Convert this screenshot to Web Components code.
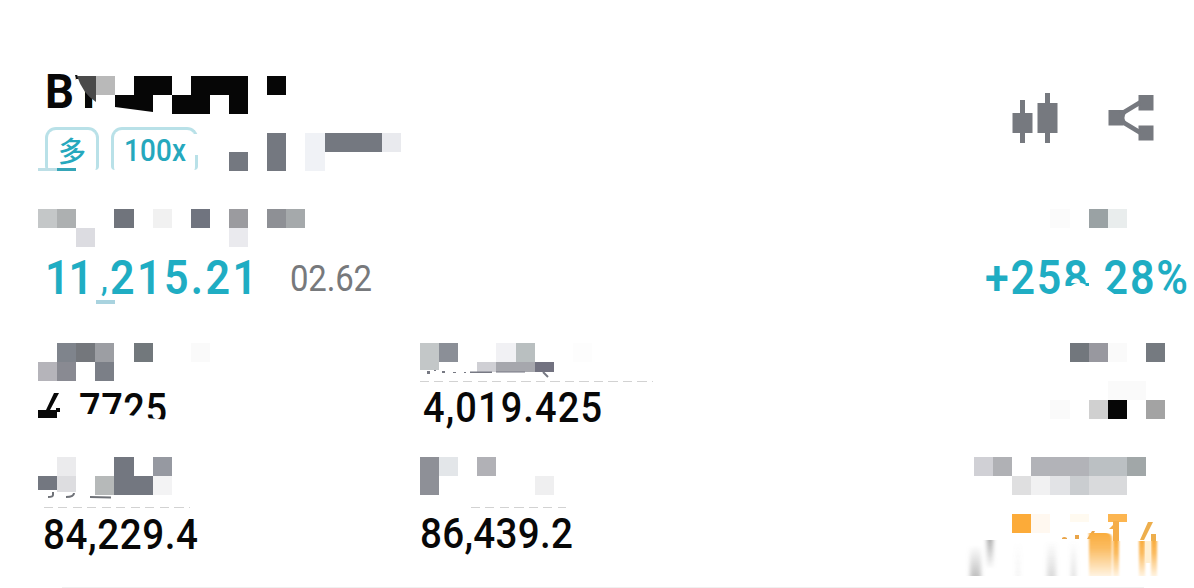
<!DOCTYPE html>
<html lang="zh">
<head>
<meta charset="utf-8">
<title>Position</title>
<style>
  body {
    margin: 0;
    background: #fff;
    font-family: Roboto, "Noto Sans CJK SC", sans-serif;
  }
</style>
</head>
<body>
<position-card></position-card>

<script>
const CELL = 19.1;

// one line of text, fitted to a width; the box is as high as the capitals
class FitText extends HTMLElement {
  constructor() {
    super();
    this.attachShadow({ mode: 'open' });
  }

  connectedCallback() {
    const width = Number(this.getAttribute('width'));
    const cap = Number(this.getAttribute('cap'));
    const weight = this.getAttribute('weight') || 500;
    const squeeze = Number(this.getAttribute('squeeze') || 0.9);
    this.shadowRoot.innerHTML = `
      <style>
        :host { display: block; width: ${width}px; height: ${cap}px; }
        svg { display: block; overflow: visible; }
        text {
          font-size: ${(cap / 0.711).toFixed(2)}px;
          font-weight: ${weight};
          fill: currentColor;
          white-space: pre;
        }
      </style>
      <svg width="${width}" height="${cap}">
        <text x="0" y="${cap}" transform="scale(${squeeze} 1)" textLength="${width / squeeze}">${this.getAttribute('value')}</text>
      </svg>
    `;
  }
}
customElements.define('fit-text', FitText);

// cells: "col row cols rows colour; ..." counted in mosaic cells
class PixelMosaic extends HTMLElement {
  constructor() {
    super();
    this.attachShadow({ mode: 'open' });
  }

  connectedCallback() {
    const cols = Number(this.getAttribute('cols'));
    const rows = Number(this.getAttribute('rows') || 2);
    const rects = this.getAttribute('cells').split(';').map((cell) => {
      const [c, r, w, h, color] = cell.trim().split(/\s+/);
      const x = Math.round(c * CELL);
      const y = Math.round(r * CELL);
      const x2 = Math.round((+c + +w) * CELL);
      const y2 = Math.round((+r + +h) * CELL);
      return `<rect x="${x}" y="${y}" width="${x2 - x}" height="${y2 - y}" fill="#${color}"/>`;
    }).join('');
    this.shadowRoot.innerHTML = `
      <style>
        :host {
          display: block;
          position: relative;
          width: ${cols * CELL}px;
          height: ${Math.round(rows * CELL)}px;
        }
        svg { display: block; overflow: visible; }
        ::slotted(svg) { position: absolute; left: 0; top: 0; overflow: visible; }
      </style>
      <svg width="100%" height="100%" shape-rendering="crispEdges">${rects}</svg>
      <slot></slot>
    `;
  }
}
customElements.define('pixel-mosaic', PixelMosaic);

class TagBadge extends HTMLElement {
  constructor() {
    super();
    this.attachShadow({ mode: 'open' });
    this.shadowRoot.innerHTML = `
      <style>
        :host {
          display: flex;
          justify-content: center;
          box-sizing: border-box;
          height: 43px;
          padding-top: 9px;
          border: 3px solid #b9e1e8;
          border-bottom: 0;
          border-radius: 11px 11px 4px 4px;
          color: #25a8bd;
        }
      </style>
      <slot></slot>
    `;
  }
}
customElements.define('tag-badge', TagBadge);

class CardActions extends HTMLElement {
  constructor() {
    super();
    this.attachShadow({ mode: 'open' });
    this.shadowRoot.innerHTML = `
      <style>
        :host { display: flex; gap: 50px; align-items: flex-start; color: #76797f; }
        svg { display: block; fill: currentColor; }
      </style>
      <svg width="46" height="50" viewBox="0 0 46 50">
        <path d="M8 7h5v13h7.500v20h-7.500v10h-5v-10h-7.500v-20h7.500zM33 0h5v10h7.500v30h-7.500v10h-5v-10h-7.500v-30h7.500z"/>
      </svg>
      <svg width="46" height="50" viewBox="0 0 46 50">
        <path d="M.5 17h15v15.500h-15zM30.500 2h15v15.500h-15zM30.500 32.500h15v15h-15z"/>
        <path d="M13 21l19-11.500M13 28l19 11.500" fill="none" stroke="currentColor" stroke-width="4.500"/>
        <path d="M14 19l4 1q-3 4.500 0 9l-4 1z"/>
      </svg>
    `;
  }
}
customElements.define('card-actions', CardActions);

class DashedRule extends HTMLElement {
  constructor() {
    super();
    this.attachShadow({ mode: 'open' });
    this.shadowRoot.innerHTML = `
      <style>
        :host {
          display: block;
          height: 1px;
          background: repeating-linear-gradient(90deg, #d2d2d2 0 9px, transparent 9px 14.500px);
        }
      </style>
    `;
  }
}
customElements.define('dashed-rule', DashedRule);

class PositionCard extends HTMLElement {
  constructor() {
    super();
    this.attachShadow({ mode: 'open' });
    this.shadowRoot.innerHTML = `
      <style>
        :host { display: block; width: 1194px; height: 588px; overflow: hidden; color: #080808; }
        section { display: grid; grid-template-columns: 382px 554px 220px; padding-left: 38px; box-sizing: border-box; }
        header { display: flex; justify-content: space-between; box-sizing: border-box; height: 209px; padding: 74px 40px 0 38px; }
        card-actions { padding-top: 19px; }
        .title { position: relative; padding-left: 7px; height: 53px; }
        .over { position: absolute; left: 0; top: 2px; }
        .line { display: flex; align-items: flex-start; position: relative; }
        .badges { padding-left: 7px; gap: 12px; width: 363px; }
        .badges svg { position: absolute; left: 0; top: 0; overflow: visible; }
        .badges .over { left: 191px; top: 6px; }
        .long { width: 54px; padding-top: 5px; font: 500 28px/30px "Noto Sans CJK SC", sans-serif; }
        .lev { width: 87px; }
        .pnl { height: 134px; }
        .pnl .line { padding-top: 13px; }
        .teal { color: #1fadc3; }
        .sub { color: #77797c; padding: 5px 0 0 33px; }
        .c { height: 114px; }
        .d { height: 130px; }
        .veil { position: absolute; left: 0; top: 0; overflow: visible; }
        hr { margin: 0 50px 0 62px; border: 0; height: 1px; background: #f0f0f0; }
      </style>

      <header>
        <div>
          <div class="title">
            <fit-text value="BT" width="58" cap="34" weight="700" squeeze=".95"></fit-text>
            <pixel-mosaic class="over" cols="13" cells="5 0 2 1 060606; 8 0 3 1 060606; 12 0 1 1 060606; 7 1 2 1 060606; 10 1 1 1 060606">
              <svg width="250" height="40">
                <path d="M37-3h41v19h-24v-2h-8l-9-12z" fill="#fff"/>
                <path d="M37-1h2l3 4h-4z" fill="#111"/>
                <path d="M47 15h7v17h-7z" fill="#080808"/>
                <path d="M39 0h19v26q-13-8-19-26z" fill="#4a4a4a"/>
                <path d="M58 0h19v19h-19z" fill="#b9b9b9"/>
                <path d="M77 19h38v17l-38-5z" fill="#060606"/>
              </svg>
            </pixel-mosaic>
          </div>
          <div class="line badges">
            <tag-badge class="long">多</tag-badge>
            <tag-badge class="lev"><fit-text value="100x" width="62" cap="22"></fit-text></tag-badge>
            <svg width="170" height="50">
              <path d="M154 7h8v21h-8z" fill="#fff"/>
              <path d="M0 41h19v3h-19z" fill="#bddfe6"/>
              <path d="M19 41h19v3h-19z" fill="#35a5b7"/>
            </svg>
            <pixel-mosaic class="over" cols="10" cells="0 1 1 1 747880; 2 0 1 2 747880; 4 0 1 2 f0f2f6; 5 0 3 1 747880; 8 0 1 1 e9eaee"></pixel-mosaic>
          </div>
        </div>
        <card-actions></card-actions>
      </header>

      <section class="pnl">
        <div>
          <pixel-mosaic cols="15" cells="0 0 1 1 c4c7c8; 1 0 1 1 adb0b1; 4 0 1 1 70747c; 6 0 1 1 f1f1f1; 8 0 1 1 70747f; 10 0 1 1 9b9b9f; 12 0 1 1 8e9095; 13 0 1 1 a5a9ab; 2 1 1 1 dcdce1; 10 1 1 1 eaeaee"></pixel-mosaic>
          <div class="line">
            <fit-text class="teal" style="padding-left:7px" value="11" width="48" cap="34" weight="600"></fit-text>
            <fit-text class="teal" style="padding:7px 0 0 8px" value="," width="9" cap="24" weight="500"></fit-text>
            <fit-text class="teal" value="215.21" width="147" cap="34" weight="600"></fit-text>
            <fit-text class="sub" value="02.62" width="82" cap="26" weight="400"></fit-text>
            <svg class="veil" width="100" height="60"><path d="M58 53h19v4h-19z" fill="#a9d3df"/></svg>
          </div>
        </div>
        <div></div>
        <div>
          <pixel-mosaic cols="9" cells="4 0 1 1 fbfbfb; 6 0 1 1 9aa2a4; 7 0 1 1 e9eded"></pixel-mosaic>
          <div class="line" style="padding-left:11px">
            <fit-text class="teal" value="+258.28%" width="203" cap="34" weight="600"></fit-text>
            <svg class="veil" width="220" height="60">
              <path d="M89 39h40l14 10h-54zM116 27h12v18h-12z" fill="#fff"/>
              <path d="M92 36h23v3h-23z" fill="#1fadc3"/>
              <path d="M97 39q7-6 15-1l-2 2z" fill="#fff"/>
            </svg>
          </div>
        </div>
      </section>

      <section class="c">
        <div>
          <pixel-mosaic cols="9" cells="1 0 1 1 7f848c; 2 0 1 1 74777c; 3 0 1 1 9c9ea3; 5 0 1 1 72787c; 8 0 1 1 fafafa; 0 1 1 1 b5b4ba; 1 1 1 1 898a92; 3 1 1 1 7b7f87"></pixel-mosaic>
          <div class="line" style="padding-top:12px">
            <fit-text style="padding-left:2px;margin-right:17px" value="4" width="22" cap="29"></fit-text>
            <fit-text value="7725" width="88" cap="30"></fit-text>
            <svg class="veil" width="140" height="60">
              <path d="M-1 10h26v36h-26zM42 33h43l24 4l22 2v7h-89z" fill="#fff"/>
              <path d="M0 29h8l8-17h5l-9 17h6v-2h4v4h-3v6h-19z" fill="#080808"/>
            </svg>
          </div>
        </div>
        <div>
          <pixel-mosaic cols="10" cells="0 0 1 1 c3c7c8; 1 0 1 1 8b8f97; 4 0 1 1 f1f1f4; 5 0 1 1 b9bfc0; 8 0 1 1 fdfdfd; 0 1 1 .42 c3c7c8; 3 1 1 .5 cfcfd4; 4 1 2 .5 a6a7ad; 6 1 1 .5 727280">
            <svg width="200" height="40">
              <path d="M7 28h3v3h-3zM22 28h3v2h-3zM14 27h2v1h-2zM33 29h3v1h-3zM44 29h2v1h-2zM50 28.500h22v1.500h-22zM76 28.500h29v1h-29z" fill="#777983"/>
              <path d="M123 29l5 5" stroke="#777983" stroke-width="2"/>
            </svg>
          </pixel-mosaic>
          <dashed-rule style="width:233px"></dashed-rule>
          <fit-text style="padding:10px 0 0 3px" value="4,019.425" width="179" cap="30"></fit-text>
        </div>
        <pixel-mosaic cols="10" rows="4" cells="5 0 1 1 72777d; 6 0 1 1 98989f; 7 0 1 1 fafafa; 9 0 1 1 757a80; 7 2 2 1 fafafa; 4 3 1 1 fafafa; 6 3 1 1 d0d0d0; 7 3 1 1 060606; 9 3 1 1 a3a3a3"></pixel-mosaic>
      </section>

      <section class="d">
        <div>
          <pixel-mosaic cols="8" cells="1 0 1 1 ebebed; 4 0 1 1 737780; 6 0 1 1 9699a1; 0 1 1 .75 737780; 1 1 1 .85 dddde0; 3 1 1 1 b6b9b9; 4 1 2 1 737780; 6 1 1 1 f3f3f4">
            <svg width="180" height="50">
              <path d="M15 35v3q0 2-5 2M36 36q0 4-8 4M52 40q10 0 21 .5" fill="none" stroke="#6f7278" stroke-width="2"/>
            </svg>
          </pixel-mosaic>
          <dashed-rule style="width:146px;margin:12px 0 0 6px"></dashed-rule>
          <fit-text style="padding:10px 0 0 5px" value="84,229.4" width="155" cap="30.500"></fit-text>
        </div>
        <div>
          <pixel-mosaic cols="8" cells="0 0 1 2 8e9097; 1 0 1 1 e3e6e9; 3 0 1 1 b1b1b6; 6 1 1 1 efeff0"></pixel-mosaic>
          <dashed-rule style="width:95px;margin:12px 0 0 51px"></dashed-rule>
          <fit-text style="padding:9px 0 0 0" value="86,439.2" width="153" cap="30.500"></fit-text>
        </div>
        <pixel-mosaic cols="10" rows="4" cells="0 0 1 1 d0d0d5; 1 0 1 1 b0b1b5; 3 0 3 1 b2b3b8; 6 0 2 1 bbc0c3; 8 0 1 1 a1a7a8; 2 1 1 1 dfdfe0; 3 1 1 1 f1f1f2; 4 1 1 1 e2e3e6; 5 1 1 1 cacdd0; 6 1 2 1 d9dadc; 2 3 1 1 fcab39; 3 3 1 1 fff8f0; 5 3 1 .4 fffaf0; 7 3 1 .38 fcb550">
          <svg width="220" height="130">
            <defs>
              <linearGradient id="up" x2="0" y2="1"><stop offset="0" stop-color="#999" stop-opacity="0"/><stop offset="1" stop-color="#999"/></linearGradient>
              <linearGradient id="down" x2="0" y2="1"><stop offset="0" stop-color="#aaa"/><stop offset="1" stop-color="#aaa" stop-opacity="0"/></linearGradient>
              <linearGradient id="gold" x2="0" y2="1"><stop offset="0" stop-color="#f9ad3e"/><stop offset=".35" stop-color="#fbbc62"/><stop offset="1" stop-color="#fff3e0"/></linearGradient>
              <filter id="soft" x="-1" width="3" y="0" height="1"><feGaussianBlur stdDeviation="2 0"/></filter>
              <filter id="edge" x="-1" width="3" y="0" height="1"><feGaussianBlur stdDeviation=".8 0"/></filter>
            </defs>
            <path d="M88 81q2-2 5 0v1h-5zM101 78h4v4h-4zM113 82l5-8h3l-4 8z" fill="#e9a54a"/>
            <g filter="url(#soft)">
              <path d="M-4 88h11v31h-11z" fill="url(#up)" opacity=".6"/>
              <path d="M13 83h6v29h-6z" fill="url(#down)"/>
              <path d="M42 84h4v35h-4z" fill="url(#up)" opacity=".12"/>
              <path d="M73 84h9v35h-9z" fill="url(#up)" opacity=".35"/>
              <path d="M97 84h5v35h-5z" fill="url(#up)" opacity=".28"/>
            </g>
            <path d="M115 76h17q6 0 6 6v37h-23z" fill="url(#gold)" filter="url(#edge)"/>
            <path d="M139 64h6v20h-6z" fill="#f5ad48"/>
            <path d="M139 84h6v35h-6z" fill="url(#gold)" filter="url(#edge)"/>
            <path d="M135 72l5-5v5z" fill="#f5ad48"/>
            <path d="M166 83l8-18h5l-9 18zM177 77h5v7h-5z" fill="#edae4d"/>
            <path d="M165 84h6v35h-6zM177 84h6v35h-6z" fill="url(#gold)" filter="url(#edge)"/>
            <path d="M171 84h6v22h-6z" fill="#ffefd2"/>
          </svg>
        </pixel-mosaic>
      </section>
      <hr>
    `;
  }
}
customElements.define('position-card', PositionCard);
</script>
</body>
</html>
